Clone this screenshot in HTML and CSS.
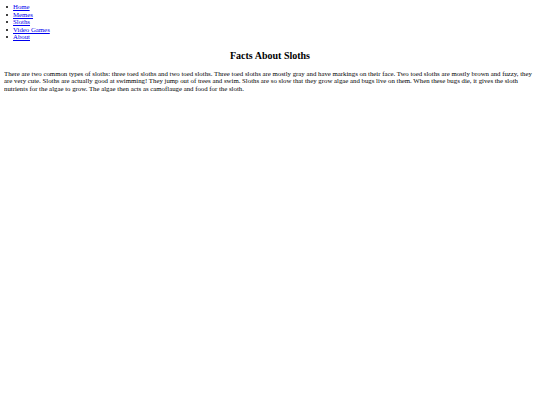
FILE: index.html
```html
<!DOCTYPE html>
<html>
<head>
<meta charset="utf-8">
<title>Facts About Sloths</title>
<link rel="stylesheet" href="styles.css">
</head>
<body>
<nav class="nav">
  <ul class="nav-list">
    <li><a href="#">Home</a></li>
    <li><a href="#">Memes</a></li>
    <li><a href="#">Sloths</a></li>
    <li><a href="#">Video Games</a></li>
    <li><a href="#">About</a></li>
  </ul>
</nav>
<main class="content">
  <h2 class="title">Facts About Sloths</h2>
  <p class="text">There are two common types of sloths: three toed sloths and two toed sloths. Three toed sloths are mostly gray and have markings on their face. Two toed sloths are mostly brown and fuzzy, they are very cute. Sloths are actually good at swimming! They jump out of trees and swim. Sloths are so slow that they grow algae and bugs live on them. When these bugs die, it gives the sloth nutrients for the algae to grow. The algae then acts as camoflauge and food for the sloth.</p>
</main>
</body>
</html>
```

FILE: styles.css
```css
html, body {
  background: #ffffff;
}
body {
  margin: 0 4px;
  padding-top: 3px;
  font-family: "Liberation Serif", "Times New Roman", serif;
  font-size: 6.8px;
  line-height: 7.5px;
  color: #000000;
}
.nav-list {
  margin: 0;
  padding: 0 0 0 9px;
  list-style: none;
}
.nav-list li {
  position: relative;
}
.nav-list li::before {
  content: "";
  position: absolute;
  left: -7px;
  top: 3px;
  width: 2px;
  height: 2px;
  border-radius: 50%;
  background: #000000;
}
.nav-list a {
  color: #0000ee;
}
.title {
  margin: 9px 0 8px;
  text-align: center;
  font-size: 10px;
  line-height: 12px;
  font-weight: bold;
}
.text {
  margin: 0;
}
```
